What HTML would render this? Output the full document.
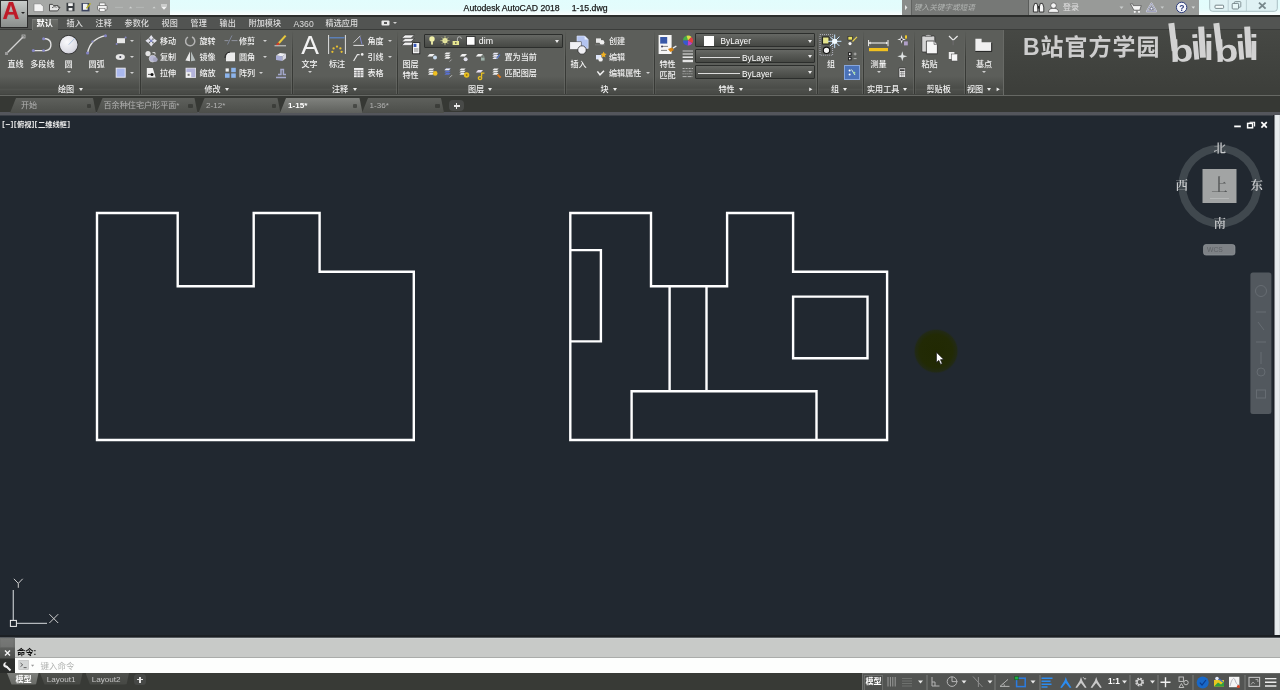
<!DOCTYPE html><html lang="zh"><head><meta charset="utf-8"><title>Autodesk AutoCAD 2018 1-15.dwg</title><style>
*{box-sizing:border-box;margin:0;padding:0}
html,body{width:1280px;height:690px;overflow:hidden;background:#212830}
body{position:relative;font-family:"Liberation Sans","Noto Sans CJK SC",sans-serif;font-size:8px;color:#e0e0e0;line-height:1}
.a{position:absolute}
.t{position:absolute;white-space:nowrap;line-height:10px;height:10px;font-size:8.1px;color:#f2f2f2;font-weight:500}
.c{text-align:center}
.sep{position:absolute;top:31px;height:63px;width:3px;background:linear-gradient(90deg,rgba(110,112,108,.55) 0 1px,rgba(52,54,50,.9) 1px 2px,rgba(100,102,98,.4) 2px 3px);-webkit-mask-image:linear-gradient(transparent,#000 45%);mask-image:linear-gradient(transparent,#000 45%)}
.arr{position:absolute;width:0;height:0;border-left:2.700px solid transparent;border-right:2.700px solid transparent;border-top:3.200px solid #ececec}
.arrs{position:absolute;width:0;height:0;border-left:2px solid transparent;border-right:2px solid transparent;border-top:2.5px solid #cfcfcf}
.combo{position:absolute;height:14.400px;border:1px solid #2c2e2c;border-radius:1px;background:linear-gradient(#666864,#565854 45%,#464844)}
.ptitle{position:absolute;top:85px;height:10px;line-height:10px;font-size:8.1px;color:#f2f2f2;white-space:nowrap;font-weight:500}
.ftab{position:absolute;top:97px;height:16px;background:linear-gradient(#585858,#464646);border-radius:6px 6px 0 0;transform:perspective(20px) rotateX(8deg);transform-origin:bottom}
</style></head><body><div id="app" style="position:absolute;left:0;top:0;width:1280px;height:690px;will-change:transform">
<div class="a" style="left:0;top:0;width:1280px;height:16px;background:linear-gradient(#e2fdfd 0,#e4fcfc 9px,#f0fcfc 12px,#fafefe 15px)"></div>
<div class="a" style="left:27px;top:0;width:143px;height:16px;background:#a6a8a6"></div>
<div class="t" style="left:463.600px;top:2.600px;color:#161616;font-size:8.700px;-webkit-text-stroke:.25px #222">Autodesk AutoCAD 2018&nbsp;&nbsp;&nbsp;&nbsp;&nbsp;1-15.dwg</div>
<div class="a" style="left:902px;top:0;width:297px;height:16px;background:#989a98"></div>
<div class="a" style="left:902px;top:0;width:9px;height:16px;background:#8a8c8a"></div>
<div class="a" style="left:911px;top:0px;width:118px;height:16px;background:#767876;border-left:1px solid #606260;border-right:1px solid #5a5c5a"></div>
<div class="t" style="left:914px;top:3px;color:#b2b5b3;font-style:italic;font-size:7.600px;font-weight:400">键入关键字或短语</div>
<div class="t" style="left:1063px;top:3.400px;color:#e2e2e2;font-size:8px;font-weight:400">登录</div>
<svg class="a" style="left:0;top:0" width="1280" height="16" viewBox="0 0 1280 16" fill="none"><g transform="translate(0 -.6)"><path d="M34 4.400h6.400l3 2.600v5.200H34z" fill="#f4f4f4" stroke="#777" stroke-width=".6"/><path d="M49.500 11.500V5h3l1 1.200h4.500v1.600h2l-2.400 3.700z" fill="#e4e4e4" stroke="#3c3c3c" stroke-width=".9"/><path d="M52 8.500c1.500-1.500 3-1.500 4.500-.5" stroke="#444" stroke-width=".8" fill="none"/><rect x="66.500" y="3.400" width="8" height="8.400" fill="#3a3e42"/><rect x="68.200" y="3.800" width="4.600" height="2.800" fill="#f4f4f4"/><rect x="68.600" y="8.600" width="3.800" height="2.600" fill="#f0f0f0"/><rect x="81.500" y="3.600" width="8" height="8.400" fill="#3c4460"/><rect x="83" y="4.400" width="4.600" height="6" fill="#f0f0f0"/><path d="M86.500 9l4-5" stroke="#b8b020" stroke-width="1.500"/><rect x="97.500" y="6" width="9.600" height="4.600" rx="1" fill="#f0f0f0" stroke="#555" stroke-width=".7"/><rect x="99.600" y="3.600" width="5.400" height="2.600" fill="#fafafa" stroke="#555" stroke-width=".5"/><rect x="99.600" y="9.200" width="5.400" height="3" fill="#fafafa" stroke="#555" stroke-width=".5"/></g><path d="M115 7.400h8M136 7.400h8" stroke="#b4b7b6" stroke-width="1"/><path d="M129 8.200l1.600-1.600 1.600 1.600zM152.500 8.200l1.600-1.600 1.600 1.600z" fill="#d0d2d1"/><path d="M161 5h6" stroke="#f0f0f0" stroke-width="1"/><path d="M161 6.600h6l-3 3.200z" fill="#f4f4f4"/><path d="M905 5l2.400 2.600-2.400 2.600z" fill="#e4e4e4"/><path d="M1033.400 12V7l1.300-3.600h2.200l.9 3.400V12zM1039.400 12V6.800l.9-3.400h2.200l1.300 3.600V12z" fill="#f6f6f6" stroke="#2a2a2a" stroke-width=".9"/><rect x="1037.600" y="6" width="2" height="2.600" fill="#2a2a2a"/><circle cx="1053.500" cy="5.600" r="2.800" fill="#f4f4f4" stroke="#444" stroke-width=".7"/><path d="M1048.500 12.400c0-3.400 2.200-4 5-4s5 .6 5 4z" fill="#f4f4f4" stroke="#444" stroke-width=".7"/><path d="M1119.500 6.500h4l-2 2.400z" fill="#c8cccb"/><path d="M1130.400 3.800h2.200l.6 1.800h8l-1.400 4.600h-5.800z" fill="#f6f6f6" stroke="#3a3a3a" stroke-width=".6"/><circle cx="1134.800" cy="11.800" r="1.100" fill="#f6f6f6"/><circle cx="1139" cy="11.800" r="1.100" fill="#f6f6f6"/><path d="M1151.500 3.400l4.800 8h-9.600z" fill="none" stroke="#f4f4f8" stroke-width="1.500" stroke-linejoin="round"/><path d="M1151.500 3.400l4.800 8h-9.600z" fill="none" stroke="#384078" stroke-width=".5" stroke-linejoin="round"/><circle cx="1151.500" cy="8.600" r="1.300" fill="#f4f4f8" stroke="#384078" stroke-width=".5"/><path d="M1160.500 6.500h3.600l-1.800 2.200z" fill="#c8cccb"/><circle cx="1181.600" cy="7.400" r="5.200" fill="#f6f6fa" stroke="#2c3c7c" stroke-width="1"/><path d="M1191.500 6.500h3.600l-1.800 2.200z" fill="#d8dcdb"/><path d="M1209.700 0V8.500a2.800 2.800 0 0 0 2.800 2.800H1274.500a2.800 2.800 0 0 0 2.800-2.800V0" fill="#e0f2f4" stroke="#a4b8bc" stroke-width=".9"/><path d="M1228.200 0v11.200M1246.400 0v11.200" stroke="#b4c8cc" stroke-width=".8"/><rect x="1215" y="5.200" width="8.600" height="3.200" rx=".8" fill="#f8ffff" stroke="#6c7c80" stroke-width=".9"/><rect x="1234.400" y="1.600" width="6.400" height="5.600" rx=".8" fill="none" stroke="#7c8c90" stroke-width=".9"/><rect x="1232.200" y="3.400" width="6.400" height="5.600" rx=".8" fill="#e8f8f8" stroke="#6c7c80" stroke-width=".9"/><path d="M1259 2.600l6.600 6M1265.600 2.600l-6.600 6" stroke="#78888c" stroke-width="1.900"/></svg>
<div class="t" style="left:1179.200px;top:2.500px;color:#283878;font-weight:bold;font-size:8.500px">?</div>
<div class="a" style="left:0;top:15px;width:1280px;height:15px;background:linear-gradient(#2c2e2c 0,#2c2e2c 1.6px,#525452 2px,#525452 13.6px,#3a3c3a 14px)"></div>
<div class="a" style="left:32px;top:19px;width:26px;height:11px;background:linear-gradient(#6a6c68,#5c5e5a);border-top:1px solid #7a7c78;border-left:1px solid #747672"></div>
<div class="t" style="left:36.6px;top:19.200px;color:#fff;font-weight:bold">默认</div>
<div class="t" style="left:66.6px;top:19.200px;color:#dcdcdc">插入</div>
<div class="t" style="left:95.6px;top:19.200px;color:#dcdcdc">注释</div>
<div class="t" style="left:124.6px;top:19.200px;color:#dcdcdc">参数化</div>
<div class="t" style="left:161.6px;top:19.200px;color:#dcdcdc">视图</div>
<div class="t" style="left:190.6px;top:19.200px;color:#dcdcdc">管理</div>
<div class="t" style="left:219.6px;top:19.200px;color:#dcdcdc">输出</div>
<div class="t" style="left:248.6px;top:19.200px;color:#dcdcdc">附加模块</div>
<div class="t" style="left:293.6px;top:19.200px;color:#dcdcdc;font-size:8.600px">A360</div>
<div class="t" style="left:325.6px;top:19.200px;color:#dcdcdc">精选应用</div>
<div class="a" style="left:0;top:30px;width:1280px;height:65px;background:linear-gradient(#464844,#3c3e3a)"></div>
<div class="a" style="left:0;top:30px;width:1003.500px;height:65px;border-right:1.500px solid #686a66;background:linear-gradient(#5c5e5a 0,#5c5e5a 46px,#4a4c48 58px,#50524e 59.500px,#4a4c48 61px,#484a46 64px,#3c3e3a 65px)"></div>
<div class="a" style="left:0;top:95px;width:1280px;height:1px;background:#666864"></div>
<div class="a" style="left:0;top:0;width:28px;height:28px;background:#2c2c2c"></div>
<div class="a" style="left:1px;top:1px;width:26px;height:26px;background:linear-gradient(#c9cdcb,#a4a8a6 55%,#8a8e8c)"></div>
<div class="a" style="left:2px;top:0px;width:18px;height:22px;font-size:23px;line-height:22px;font-weight:bold;color:#be1a28;text-align:center;transform:scaleX(1.02);text-shadow:0 0 1px rgba(190,40,50,.6)">A</div>
<div class="arrs" style="left:21px;top:12px;border-top-color:#222"></div>
<div class="sep" style="left:139px"></div>
<div class="sep" style="left:291px"></div>
<div class="sep" style="left:396px"></div>
<div class="sep" style="left:564px"></div>
<div class="sep" style="left:653px"></div>
<div class="sep" style="left:816px"></div>
<div class="sep" style="left:862px"></div>
<div class="sep" style="left:913px"></div>
<div class="sep" style="left:964px"></div>
<div class="t c" style="left:-14.5px;top:60px;width:60px;">直线</div>
<div class="t c" style="left:12.4px;top:60px;width:60px;">多段线</div>
<div class="t c" style="left:38.5px;top:60px;width:60px;">圆</div>
<div class="t c" style="left:66.5px;top:60px;width:60px;">圆弧</div>
<div class="arrs" style="left:66.5px;top:71px"></div>
<div class="arrs" style="left:94.5px;top:71px"></div>
<div class="arrs" style="left:130.3px;top:40px"></div>
<div class="arrs" style="left:130.3px;top:56.2px"></div>
<div class="arrs" style="left:130.3px;top:72.2px"></div>
<div class="ptitle" style="left:58px">绘图</div>
<div class="arr" style="left:78.5px;top:87.5px"></div>
<div class="t" style="left:160px;top:37px;">移动</div>
<div class="t" style="left:160px;top:53.2px;">复制</div>
<div class="t" style="left:160px;top:69.2px;">拉伸</div>
<div class="t" style="left:199.5px;top:37px;">旋转</div>
<div class="t" style="left:199.5px;top:53.2px;">镜像</div>
<div class="t" style="left:199.5px;top:69.2px;">缩放</div>
<div class="t" style="left:239px;top:37px;">修剪</div>
<div class="t" style="left:239px;top:53.2px;">圆角</div>
<div class="t" style="left:239px;top:69.2px;">阵列</div>
<div class="arrs" style="left:262.5px;top:40px"></div>
<div class="arrs" style="left:262.5px;top:56.2px"></div>
<div class="arrs" style="left:259px;top:72.2px"></div>
<div class="ptitle" style="left:204.5px">修改</div>
<div class="arr" style="left:224.5px;top:87.5px"></div>
<div class="a" style="left:299px;top:31px;width:22px;height:28px;font-size:26.500px;line-height:28px;color:#f2f2f2;text-align:center;font-weight:normal">A</div>
<div class="t c" style="left:279.5px;top:60px;width:60px;">文字</div>
<div class="arrs" style="left:307.5px;top:71px"></div>
<div class="t c" style="left:307px;top:60px;width:60px;">标注</div>
<div class="t" style="left:367.5px;top:37px;">角度</div>
<div class="t" style="left:367.5px;top:53.2px;">引线</div>
<div class="t" style="left:367.5px;top:69.2px;">表格</div>
<div class="arrs" style="left:388px;top:40px"></div>
<div class="arrs" style="left:388px;top:56.2px"></div>
<div class="ptitle" style="left:332px">注释</div>
<div class="arr" style="left:352.5px;top:87.5px"></div>
<div class="t c" style="left:380.5px;top:60px;width:60px;">图层</div>
<div class="t c" style="left:380.5px;top:71px;width:60px;">特性</div>
<div class="combo" style="left:424px;top:33.600px;width:138.600px"></div>
<div class="t" style="left:478.8px;top:36.4px;color:#fff;font-size:8.800px">dim</div>
<div class="arr" style="left:554.5px;top:39.5px"></div>
<div class="t" style="left:504.5px;top:53.2px;">置为当前</div>
<div class="t" style="left:504.5px;top:69.2px;">匹配图层</div>
<div class="ptitle" style="left:468px">图层</div>
<div class="arr" style="left:488px;top:87.5px"></div>
<div class="t c" style="left:548.5px;top:60px;width:60px;">插入</div>
<div class="t" style="left:609px;top:37px;">创建</div>
<div class="t" style="left:609px;top:53.2px;">编辑</div>
<div class="t" style="left:609px;top:69.2px;">编辑属性</div>
<div class="arrs" style="left:645.5px;top:72.2px"></div>
<div class="ptitle" style="left:600.5px">块</div>
<div class="arr" style="left:612.5px;top:87.5px"></div>
<div class="t c" style="left:637.5px;top:60px;width:60px;">特性</div>
<div class="t c" style="left:637.5px;top:71px;width:60px;">匹配</div>
<div class="combo" style="left:695px;top:33px;width:120px"></div>
<div class="arr" style="left:808.1px;top:39.5px"></div>
<div class="combo" style="left:695px;top:49px;width:120px"></div>
<div class="arr" style="left:808.1px;top:55.4px"></div>
<div class="combo" style="left:695px;top:65px;width:120px"></div>
<div class="arr" style="left:808.1px;top:70.9px"></div>
<div class="t" style="left:720.5px;top:36.4px;color:#fff;font-size:8.300px">ByLayer</div>
<div class="t" style="left:742px;top:52.6px;color:#fff;font-size:8.300px">ByLayer</div>
<div class="t" style="left:742px;top:68.6px;color:#fff;font-size:8.300px">ByLayer</div>
<div class="a" style="left:704px;top:36px;width:10px;height:10px;background:#fff"></div>
<div class="a" style="left:700px;top:57px;width:40px;height:1px;background:#ddd"></div>
<div class="a" style="left:698px;top:73px;width:42px;height:1px;background:#ddd"></div>
<div class="ptitle" style="left:718.5px">特性</div>
<div class="arr" style="left:738.5px;top:87.5px"></div>
<div class="t c" style="left:801px;top:60px;width:60px;">组</div>
<div class="ptitle" style="left:831px">组</div>
<div class="arr" style="left:843px;top:87.5px"></div>
<div class="a" style="left:844px;top:65px;width:16px;height:15px;background:#4a72b8;border:1px solid #86a6dc"></div>
<div class="t c" style="left:848.5px;top:60px;width:60px;">测量</div>
<div class="arrs" style="left:876.5px;top:71px"></div>
<div class="ptitle" style="left:867px">实用工具</div>
<div class="arr" style="left:902.5px;top:87.5px"></div>
<div class="t c" style="left:899.5px;top:60px;width:60px;">粘贴</div>
<div class="arrs" style="left:927.5px;top:71px"></div>
<div class="ptitle" style="left:926.5px">剪贴板</div>
<div class="t c" style="left:954px;top:60px;width:60px;">基点</div>
<div class="arrs" style="left:982px;top:71px"></div>
<div class="ptitle" style="left:967px">视图</div>
<div class="arr" style="left:987px;top:87.5px"></div>
<svg class="a" style="left:0;top:0" width="1280" height="116" viewBox="0 0 1280 116" fill="none"><defs><radialGradient id="gc" cx=".4" cy=".35" r=".8"><stop offset="0" stop-color="#fafafc"/><stop offset=".7" stop-color="#dcdce4"/><stop offset="1" stop-color="#b8b8c4"/></radialGradient></defs><path d="M6.5 53.5L23.5 36.5" stroke="#d4d4d4" stroke-width="1.2"/><rect x="5" y="52" width="3" height="3" fill="#9a9a9a"/><rect x="22" y="35" width="3" height="3" fill="none" stroke="#bbb" stroke-width=".8"/><path d="M33 50.6H46A6 6 0 0 0 46 38.8H43.5" stroke="#e2e2e2" stroke-width="1.4" fill="none"/><circle cx="33.3" cy="50.6" r="1.5" fill="#8484c4"/><circle cx="43.6" cy="50.6" r="1.4" fill="#8484c4"/><circle cx="43.6" cy="38.8" r="1.5" fill="#8484c4"/><circle cx="68.7" cy="44.7" r="9.6" fill="#2c2c2c"/><circle cx="68.7" cy="44.7" r="8.9" fill="url(#gc)"/><path d="M68.7 44.7L75 38" stroke="#9db8d8" stroke-width=".8"/><path d="M87.6 53Q90 39 105.5 35.6" stroke="#e4e4e4" stroke-width="1.4" fill="none"/><circle cx="87.6" cy="53" r="1.6" fill="#8484c4"/><circle cx="105.5" cy="35.8" r="1.5" fill="#8484c4"/><circle cx="92.5" cy="41.5" r="1.1" fill="#8484c4"/><rect x="117" y="38.2" width="8" height="5" fill="#e8e8e8"/><circle cx="116.6" cy="44" r="1" fill="#8484c4"/><circle cx="125.6" cy="37.6" r="1" fill="#8484c4"/><ellipse cx="120.3" cy="57" rx="4.6" ry="3" fill="#e6e6e6"/><circle cx="120.3" cy="57" r="1" fill="#445"/><rect x="116.2" y="68.2" width="9" height="9" fill="#aab8ee" stroke="#e8e8f4" stroke-width="1"/><path d="M151.2 35l2.6 3.4h-1.6v1.4h1.4v-1.6l3.4 2.6-3.4 2.6v-1.6h-1.4v1.4h1.6l-2.6 3.4-2.6-3.4h1.6v-1.4h-1.4v1.6l-3.4-2.6 3.4-2.6v1.6h1.4v-1.4h-1.6z" fill="#e4e4ee"/><rect x="150" y="39.6" width="2.4" height="2.4" fill="#7c84c0"/><circle cx="148" cy="53.6" r="2.6" fill="#e4e4e4"/><circle cx="152.6" cy="58.6" r="3.4" fill="#b8b8d4" stroke="#ddd" stroke-width=".6"/><circle cx="155.3" cy="59.6" r="2.4" fill="#a4a4c0"/><path d="M152.5 52.6h2.5v2" stroke="#ddd" stroke-width="1" fill="none"/><path d="M146.8 68h6l2.8 9.4h-8.8z" fill="#f0f0f0"/><circle cx="152" cy="74.6" r="1.5" fill="#111"/><path d="M148 74.4h3" stroke="#333" stroke-width=".8"/><path d="M192 37A4.6 4.6 0 1 1 188 37.2" stroke="#b4b4b4" stroke-width="1.5" fill="none"/><path d="M190 51.6V61.2L185.4 60.4z" fill="#e8e8e8"/><path d="M191 51.6V61.2L195.4 60.4z" fill="#b4bcbc"/><rect x="186" y="68.2" width="9.6" height="9.2" fill="#b4b4dc"/><rect x="186" y="68.2" width="9.6" height="9.2" fill="none" stroke="#e8e8f0" stroke-width=".8"/><rect x="186" y="72.2" width="5.2" height="5.2" fill="#f4f4f4"/><rect x="187.6" y="73.8" width="2" height="2" fill="#777"/><path d="M224.5 40.6h4M231.5 40.6h6" stroke="#9ca0b0" stroke-width=".8"/><path d="M227.5 44.5l4.5-9" stroke="#8890a8" stroke-width=".8"/><path d="M226 61.2V57A4.6 4.6 0 0 1 230.6 52.6H235V61.2z" fill="#ececec"/><path d="M225 58A6 6 0 0 1 230 52" stroke="#222" stroke-width="1" fill="none"/><rect x="225.6" y="68.4" width="3.2" height="3.2" fill="#f0f0f0"/><rect x="231.2" y="67.8" width="4.6" height="4.4" fill="#8cb4ec"/><rect x="225" y="73.4" width="4.6" height="4.4" fill="#8cb4ec"/><rect x="231.2" y="73.4" width="4.6" height="4.4" fill="#8cb4ec"/><path d="M278.5 43.5L285.6 35.6" stroke="#e8c83c" stroke-width="2"/><path d="M276.8 45.2L279 43" stroke="#d03c28" stroke-width="2.2"/><path d="M274.5 45.8H286" stroke="#e0e0e0" stroke-width=".9"/><path d="M276 55.5l4-2.6 6 .8-3.6 2.6z" fill="#f0f0f4"/><path d="M276 55.5l6.4.8v4.6l-6.4-.9z" fill="#a8acd4"/><path d="M282.4 56.3l3.6-2.6v4.5l-3.6 2.7z" fill="#d8d8e4"/><path d="M276 77.5h10M278 74.5h3v-5h2.4v5h2.6" stroke="#a4a8cc" stroke-width="1.5" fill="none"/><path d="M328.6 35V54M345.4 35V54" stroke="#e0e0e0" stroke-width="1"/><path d="M329.5 37.8H344.5" stroke="#5c8cd8" stroke-width="1.1"/><circle cx="332.4" cy="51.8" r="1.15" fill="#e8c030"/><circle cx="333.6" cy="48.4" r="1.15" fill="#e8c030"/><circle cx="337" cy="46.6" r="1.15" fill="#e8c030"/><circle cx="340.4" cy="48.4" r="1.15" fill="#e8c030"/><circle cx="341.6" cy="51.8" r="1.15" fill="#e8c030"/><path d="M353.6 42.6L360.4 35.8" stroke="#d8d8d8" stroke-width="1"/><path d="M353.4 45.4H364" stroke="#e4e4e4" stroke-width="1"/><path d="M360 37L362 44.5" stroke="#7c84c8" stroke-width="1"/><path d="M353.6 61L357.4 54.6H359.6" stroke="#e4e4e4" stroke-width="1.2" fill="none"/><circle cx="362.2" cy="54.4" r="1.3" fill="#f0f0f0"/><rect x="354" y="68" width="9.4" height="9.2" fill="#f0f0f0"/><path d="M354 70.4h9.4M354 72.7h9.4M354 75h9.4M357.1 70.4v6.8M360.3 70.4v6.8" stroke="#555" stroke-width=".6"/><path d="M405 35h9.4l-3.4 3.2h-9.4z" fill="#f2f2f2" stroke="#222" stroke-width=".5"/><path d="M405 38.6h9.4l-3.4 3.2h-9.4z" fill="#f2f2f2" stroke="#222" stroke-width=".5"/><path d="M405 42.2h9.4l-3.4 3.2h-9.4z" fill="#f2f2f2" stroke="#222" stroke-width=".5"/><rect x="412.6" y="42.6" width="7.2" height="11.2" fill="#f4f4f4" stroke="#1c1c1c" stroke-width=".8"/><rect x="413.6" y="43.8" width="2.8" height="3.2" fill="#3858b8"/><path d="M414 49h4.4M414 51h4.4" stroke="#555" stroke-width=".7"/><circle cx="432" cy="39" r="2.7" fill="#f0f0a8"/><rect x="431" y="41" width="2" height="3.6" fill="#e0e0a0"/><circle cx="445" cy="40.6" r="2.6" fill="#f2f2a8"/><path d="M445 36v9.2M440.4 40.6h9.2M441.8 37.4l6.4 6.4M448.2 37.4l-6.4 6.4" stroke="#d8d894" stroke-width=".7"/><rect x="452.6" y="41" width="6.4" height="4" fill="#e6e690"/><rect x="455.2" y="42.2" width="1.2" height="1.6" fill="#444"/><path d="M457.4 41v-2.2a2 2 0 0 1 4 0" stroke="#c0c0c0" stroke-width=".9" fill="none"/><rect x="466.4" y="36.6" width="8.6" height="8.6" fill="#fff" stroke="#222" stroke-width=".8"/><path d="M429.6 54h5l-2.2 2.4h-5z" fill="#f0f0f0"/><circle cx="435" cy="57.6" r="2" fill="#c8dcf0"/><path d="M446 52.6h4.6l-1.6 1.7h-4.6z" fill="#ececec"/><path d="M446 54.8h4.6l-1.6 1.7h-4.6z" fill="#ececec"/><path d="M446 57h4.6l-1.6 1.7h-4.6z" fill="#ececec"/><path d="M449.6 61.6l2-2" stroke="#aaa" stroke-width="1"/><path d="M462 54h5l-2.2 2.4h-5z" fill="#f0f0f0"/><circle cx="465.6" cy="59.2" r="2" fill="#e0e0ec"/><path d="M478 54h5l-2.2 2.4h-5z" fill="#f0f0f0"/><rect x="481" y="57.6" width="3.6" height="3" fill="#9cb0a8"/><path d="M481.8 57.6v-1a1 1 0 0 1 2 0v1" stroke="#9cb0a8" stroke-width=".6" fill="none"/><path d="M494 52.8h4.6l-1.6 1.7h-4.6z" fill="#e8e8f4"/><path d="M494 55h4.6l-1.6 1.7h-4.6z" fill="#e8e8f4"/><path d="M494 57.2h4.6l-1.6 1.7h-4.6z" fill="#e8e8f4"/><path d="M496.5 58.5l3.5-4" stroke="#5878c8" stroke-width="1.2"/><path d="M429.6 68.6h4.6l-1.6 1.7h-4.6z" fill="#ececec"/><path d="M429.6 70.8h4.6l-1.6 1.7h-4.6z" fill="#ececec"/><path d="M429.6 73h4.6l-1.6 1.7h-4.6z" fill="#ececec"/><circle cx="435.2" cy="73.4" r="2.3" fill="#f0c020"/><path d="M446 68.6h4.6l-1.6 1.7h-4.6z" fill="#5870d0"/><path d="M446 70.8h4.6l-1.6 1.7h-4.6z" fill="#5870d0"/><path d="M446 73h4.6l-1.6 1.7h-4.6z" fill="#5870d0"/><path d="M449.6 77.6l2.4-2.4" stroke="#bbb" stroke-width="1"/><path d="M446 68.600h4.6l-1.600 1.700h-4.600z" fill="#eee"/><path d="M461 68.6h4.6l-1.6 1.7h-4.6z" fill="#ececec"/><path d="M461 70.8h4.6l-1.6 1.7h-4.6z" fill="#ececec"/><path d="M461 73h4.6l-1.6 1.7h-4.6z" fill="#ececec"/><circle cx="466.6" cy="75" r="2.7" fill="#e8c020"/><circle cx="466.6" cy="75" r="1" fill="#a07810"/><path d="M478 70h5l-2.2 2.4h-5z" fill="#e4dcf0"/><path d="M480 76.6a1.700 1.500 0 1 0 .1 0M481.600 76.600v-3.400h2.800" stroke="#e8c020" stroke-width="1.300" fill="none"/><path d="M494 68.6h4.6l-1.6 1.7h-4.6z" fill="#ececec"/><path d="M494 70.8h4.6l-1.6 1.7h-4.6z" fill="#ececec"/><path d="M494 73h4.6l-1.6 1.7h-4.6z" fill="#ececec"/><path d="M497.600 74.600l3 3" stroke="#e07818" stroke-width="2"/><path d="M577 36h7.600l3.600 3.600v8.800h-11.200z" fill="#b4c4f0" stroke="#e0e8fc" stroke-width=".6"/><path d="M584.600 36v3.600h3.600z" fill="#e8f0ff"/><rect x="569.800" y="41.800" width="11.400" height="7.800" fill="#f0f0f4" stroke="#333" stroke-width=".5"/><circle cx="582" cy="50" r="4.200" fill="#f0f0f4" stroke="#222" stroke-width=".7"/><rect x="596" y="38.400" width="5" height="4.400" fill="#e8e8e8"/><circle cx="602" cy="42.400" r="2.400" fill="#f0f0f0"/><path d="M595 44.800h10" stroke="#888" stroke-width=".6"/><rect x="596" y="55" width="5.400" height="4.400" fill="#dce4f8"/><circle cx="600.600" cy="59.400" r="2.200" fill="#f0f0f0"/><path d="M603.600 51.600l1 2 2 .4-1.600 1.400.4 2.200-1.800-1.200-1.800 1.200.4-2.200-1.600-1.400 2-.4z" fill="#f0b020"/><path d="M597.400 71.400l2.600 3.400 4-4" stroke="#f0f0f0" stroke-width="1.500" fill="none"/><rect x="658.600" y="35" width="13" height="19" fill="#f6f6f6"/><rect x="660.200" y="37" width="7" height="6.600" fill="#3858a8"/><path d="M662 46.400h6M661 50.400h6" stroke="#666" stroke-width=".8"/><circle cx="662" cy="46.500" r=".9" fill="#335"/><path d="M668 49l4-1.500 2 2.600-3.600 2z" fill="#d88410"/><path d="M673 48.200l3.400-2.200" stroke="#e8e8e8" stroke-width="1.400"/><g transform="translate(688 40.600)"><path d="M0 0L-5 0A5 5 0 0 1 -1.500 -4.770Z" fill="#48b048"/><path d="M0 0L-1.500 -4.770A5 5 0 0 1 3.500 -3.570Z" fill="#d8e040"/><path d="M0 0L3.500 -3.570A5 5 0 0 1 4.300 2.550Z" fill="#e04040"/><path d="M0 0L4.300 2.550A5 5 0 0 1 -.5 4.970Z" fill="#c040c8"/><path d="M0 0L-.5 4.970A5 5 0 0 1 -5 0Z" fill="#3858d0"/></g><path d="M682.600 51H693" stroke="#e4e4e4" stroke-width="0.8"/><path d="M682.600 54H693" stroke="#e4e4e4" stroke-width="1.1"/><path d="M682.600 57.2H693" stroke="#e4e4e4" stroke-width="1.6"/><path d="M682.600 61H693" stroke="#e4e4e4" stroke-width="2.4"/><path d="M682.600 68.5H693" stroke="#b4b4b4" stroke-width="1" stroke-dasharray="2 1"/><path d="M682.600 71.2H693" stroke="#b4b4b4" stroke-width="1" stroke-dasharray="3 1 1 1"/><path d="M682.600 73.8H693" stroke="#b4b4b4" stroke-width="1" stroke-dasharray="1 1"/><path d="M682.600 76.6H693" stroke="#b4b4b4" stroke-width="1" stroke-dasharray="4 1"/><rect x="820" y="34.600" width="12.600" height="20.600" fill="none" stroke="#c8c8d8" stroke-width=".8" stroke-dasharray="1 1"/><rect x="822.600" y="37" width="6.400" height="7" fill="#e4e48c" stroke="#111" stroke-width=".9"/><circle cx="826.500" cy="50.300" r="3.200" fill="#f4f4f4" stroke="#111" stroke-width="1.100"/><path d="M834.700 34.500v13.600M828 41.300h13.400M830 36.600l9.400 9.400M839.400 36.600l-9.400 9.400" stroke="#c4e4ff" stroke-width="1"/><circle cx="834.700" cy="41.300" r="2.600" fill="#f4fcff"/><rect x="848" y="36.400" width="4.400" height="3.600" fill="#e8e060" stroke="#222" stroke-width=".6"/><circle cx="850" cy="43.600" r="1.600" fill="#f4f4f4"/><path d="M852.500 41.500l4.500-4.600" stroke="#e8d050" stroke-width="1.200"/><rect x="848" y="52.200" width="3.600" height="3.600" fill="#222"/><rect x="848" y="56.800" width="3.600" height="3.600" fill="#222"/><circle cx="849.800" cy="54" r=".9" fill="#fff"/><circle cx="849.800" cy="58.600" r=".9" fill="#fff"/><path d="M853.600 54h3M855.100 52.500v3M853.600 58.600h3" stroke="#d0d0d0" stroke-width=".7"/><circle cx="849.600" cy="70.400" r="1" fill="#fff"/><circle cx="849.600" cy="74.400" r="1" fill="#fff"/><path d="M851.500 69.500l3.500 5.500" stroke="#d8f0d8" stroke-width="1"/><circle cx="854.400" cy="72.800" r="1" fill="#9fe09f"/><path d="M869 43H887.600" stroke="#d8d8d8" stroke-width="1.300"/><path d="M868.600 40v6.200M888 40v6.200" stroke="#f0f0f0" stroke-width="1"/><path d="M870.600 41.400v3.200l-1.600-1.600zM886 41.400v3.200l1.600-1.600z" fill="#f0f0f0"/><rect x="869" y="48" width="19" height="3.200" fill="#f0c020"/><path d="M901.6 35l0.968 3.432 3.432 0.968 -3.432 0.968 -0.968 3.432 -0.968 -3.432 -3.432 -0.968 3.432 -0.968 z" fill="#f0f0f0"/><circle cx="901.600" cy="39.400" r="1" fill="#223"/><rect x="905" y="35.400" width="2" height="3.200" fill="#f0c828"/><rect x="904" y="41.400" width="3.800" height="4" fill="#b0a0c8"/><path d="M902.3 51.3l1.1 3.9 3.9 1.1 -3.9 1.1 -1.1 3.9 -1.1 -3.9 -3.9 -1.1 3.9 -1.1 z" fill="#e0e4e4"/><rect x="899" y="68" width="6.600" height="9.400" fill="#e8e8e8" stroke="#333" stroke-width=".6"/><rect x="900" y="69.200" width="4.600" height="1.800" fill="#444"/><path d="M900 72.600h4.600M900 74.600h4.600M901.500 71.600v5M903.100 71.600v5" stroke="#666" stroke-width=".5"/><rect x="921.800" y="36" width="13" height="16" rx="1" fill="#d4d4d4" stroke="#2a2a2a" stroke-width=".7"/><path d="M925 36.200a3.400 1.800 0 0 1 6.600 0z" fill="#eee" stroke="#333" stroke-width=".5"/><path d="M926.400 41h7.600l3.400 3.400v9.400h-11z" fill="#f6f6f6" stroke="#1c1c1c" stroke-width=".7"/><path d="M934 41v3.400h3.400" fill="#ddd" stroke="#333" stroke-width=".5"/><path d="M949 36l4.200 4.200L957.600 36" stroke="#eaeaea" stroke-width="1.200" fill="none"/><path d="M953.200 40.200v5" stroke="#666" stroke-width="1.600"/><rect x="948.800" y="52" width="5.600" height="7" fill="#ececec"/><rect x="951.600" y="54" width="6" height="7" fill="#f6f6f6" stroke="#444" stroke-width=".5"/><path d="M975.400 38.800h6.200v3.400h9.800v8.800h-16z" fill="#f0f0f0"/><path d="M975.400 51.400h16.300V42.600" stroke="#1c1c1c" stroke-width=".9" fill="none"/><path d="M809.200 87.400l3.200 1.900-3.200 1.900zM996.600 87.400l3.200 1.900-3.200 1.900z" fill="#ececec"/><rect x="381.500" y="20.500" width="8" height="5" rx="1" fill="#e8e8e8"/><rect x="384" y="22.200" width="3" height="1.600" fill="#333"/></svg>
<div class="arrs" style="left:392.5px;top:22px"></div>
<div class="a" style="left:1023px;top:33px;height:28px;line-height:28px;font-size:23px;font-weight:bold;color:#cdcdcd;white-space:nowrap;letter-spacing:1px">B站官方学园</div>
<span class="a" style="left:1170.2px;top:35.5585px;font-size:31px;line-height:31px;height:31px;font-weight:bold;color:#d2d2d2;transform-origin:0 85%;transform:rotate(-2deg) scaleX(1.25)">b</span>
<div class="a" style="left:1170.4px;top:22.5px;width:6.4px;height:28px;background:#d2d2d2;transform:rotate(-7deg)"></div>
<span class="a" style="left:1192px;top:29.8725px;font-size:35px;line-height:35px;height:35px;font-weight:bold;color:#d2d2d2;transform-origin:0 85%;transform:rotate(-5deg) scaleX(1)">i</span>
<span class="a" style="left:1197px;top:21.6005px;font-size:43px;line-height:43px;height:43px;font-weight:bold;color:#d2d2d2;transform-origin:0 85%;transform:rotate(-3.3deg) scaleX(1)">l</span>
<span class="a" style="left:1204px;top:30.3725px;font-size:35px;line-height:35px;height:35px;font-weight:bold;color:#d2d2d2;transform-origin:0 85%;transform:rotate(0deg) scaleX(1)">i</span>
<span class="a" style="left:1215.2px;top:35.5585px;font-size:31px;line-height:31px;height:31px;font-weight:bold;color:#d2d2d2;transform-origin:0 85%;transform:rotate(-2deg) scaleX(1.25)">b</span>
<div class="a" style="left:1215.4px;top:22.5px;width:6.4px;height:28px;background:#d2d2d2;transform:rotate(-7deg)"></div>
<span class="a" style="left:1236.5px;top:29.8725px;font-size:35px;line-height:35px;height:35px;font-weight:bold;color:#d2d2d2;transform-origin:0 85%;transform:rotate(-5deg) scaleX(1)">i</span>
<span class="a" style="left:1242.5px;top:21.6005px;font-size:43px;line-height:43px;height:43px;font-weight:bold;color:#d2d2d2;transform-origin:0 85%;transform:rotate(-3.3deg) scaleX(1)">l</span>
<span class="a" style="left:1249px;top:30.3725px;font-size:35px;line-height:35px;height:35px;font-weight:bold;color:#d2d2d2;transform-origin:0 85%;transform:rotate(0deg) scaleX(1)">i</span>
<div class="a" style="left:0;top:96px;width:1280px;height:17px;background:#363834"></div>
<div class="a" style="left:0;top:112px;width:1280px;height:4px;background:linear-gradient(#54565c 0,#54565c 2.600px,#2a3038 4px)"></div>
<div class="a" style="left:10px;top:98px;width:86px;height:15px;background:linear-gradient(#5e605c,#4c4e4a);clip-path:polygon(6px 0,calc(100% - 3px) 0,100% 100%,0 100%);border-radius:6px 4px 0 0"></div>
<div class="t" style="left:21px;top:100.600px;color:#b2b2b2;font-weight:400">开始</div>
<div class="a" style="left:96.5px;top:98px;width:101px;height:15px;background:linear-gradient(#5e605c,#4c4e4a);clip-path:polygon(6px 0,calc(100% - 3px) 0,100% 100%,0 100%);border-radius:6px 4px 0 0"></div>
<div class="t" style="left:103.5px;top:100.600px;color:#b2b2b2;font-weight:400">百余种住宅户形平面*</div>
<div class="a" style="left:198.5px;top:98px;width:82px;height:15px;background:linear-gradient(#5e605c,#4c4e4a);clip-path:polygon(6px 0,calc(100% - 3px) 0,100% 100%,0 100%);border-radius:6px 4px 0 0"></div>
<div class="t" style="left:206px;top:100.600px;color:#b2b2b2;font-weight:400">2-12*</div>
<div class="a" style="left:280px;top:98px;width:82.5px;height:15px;background:linear-gradient(#80827e,#5e605c);clip-path:polygon(6px 0,calc(100% - 3px) 0,100% 100%,0 100%);border-radius:6px 4px 0 0"></div>
<div class="t" style="left:288px;top:100.600px;color:#fff;font-weight:bold">1-15*</div>
<div class="a" style="left:362px;top:98px;width:82px;height:15px;background:linear-gradient(#5e605c,#4c4e4a);clip-path:polygon(6px 0,calc(100% - 3px) 0,100% 100%,0 100%);border-radius:6px 4px 0 0"></div>
<div class="t" style="left:369.5px;top:100.600px;color:#b2b2b2;font-weight:400">1-36*</div>
<div class="a" style="left:86.8px;top:103.500px;width:4.500px;height:4.500px;background:rgba(40,42,38,.55);border-radius:1px"></div>
<div class="a" style="left:188.3px;top:103.500px;width:4.500px;height:4.500px;background:rgba(40,42,38,.55);border-radius:1px"></div>
<div class="a" style="left:271.8px;top:103.500px;width:4.500px;height:4.500px;background:rgba(40,42,38,.55);border-radius:1px"></div>
<div class="a" style="left:352.8px;top:103.500px;width:4.500px;height:4.500px;background:rgba(40,42,38,.55);border-radius:1px"></div>
<div class="a" style="left:435.3px;top:103.500px;width:4.500px;height:4.500px;background:rgba(40,42,38,.55);border-radius:1px"></div>
<div class="a" style="left:448.500px;top:100px;width:15.500px;height:11px;background:#484a48;border-radius:4px"></div>
<div class="a" style="left:453.500px;top:105.300px;width:6px;height:1.400px;background:#e8e8e8"></div><div class="a" style="left:455.800px;top:103px;width:1.400px;height:6px;background:#e8e8e8"></div>
<div class="a" style="left:0;top:116px;width:1280px;height:522px;background:#212830"></div>
<span class="t" style="left:2.3px;top:119.2px;color:#ececec;font-weight:bold;font-size:7.300px;">[</span>
<span class="t" style="left:5.6px;top:119.2px;color:#ececec;font-weight:bold;font-size:7.300px;font-size:8.500px;">–</span>
<span class="t" style="left:10.8px;top:119.2px;color:#ececec;font-weight:bold;font-size:7.300px;">]</span>
<span class="t" style="left:14px;top:119.2px;color:#ececec;font-weight:bold;font-size:7.300px;">[</span>
<span class="t" style="left:16.9px;top:119.6px;color:#ececec;font-weight:bold;font-size:7.300px;">俯视</span>
<span class="t" style="left:31.7px;top:119.2px;color:#ececec;font-weight:bold;font-size:7.300px;">]</span>
<span class="t" style="left:34.7px;top:119.2px;color:#ececec;font-weight:bold;font-size:7.300px;">[</span>
<span class="t" style="left:38px;top:119.6px;color:#ececec;font-weight:bold;font-size:7.300px;letter-spacing:-.1px;">二维线框</span>
<span class="t" style="left:67.6px;top:119.2px;color:#ececec;font-weight:bold;font-size:7.300px;">]</span>
<svg class="a" style="left:0;top:116px" width="1280" height="522" viewBox="0 116 1280 522" fill="none" stroke="#fff" stroke-width="2.400" stroke-linejoin="miter"><path d="M97 213H177.700V286.300H253.700V213H319.600V271.800H413.800V440H97Z"/><path d="M570.300 213H651V286.300H727.100V213H793.100V271.800H887.100V440H570.300Z"/><path d="M570.300 250.100H600.900V341.400H570.300"/><path d="M669.600 286.300V391.200M706.500 286.300V391.200"/><path d="M631.600 440V391.200H816.500V440"/><path d="M793.100 296.600H867.500V358.300H793.100Z"/></svg>
<svg class="a" style="left:0;top:116px" width="1280" height="522" viewBox="0 116 1280 522" fill="none"><defs><radialGradient id="halo"><stop offset="0" stop-color="#212902"/><stop offset=".72" stop-color="#222a05"/><stop offset=".9" stop-color="#222a10" stop-opacity=".85"/><stop offset="1" stop-color="#212830" stop-opacity="0"/></radialGradient></defs><circle cx="936.100" cy="351.100" r="23" fill="url(#halo)"/><path d="M936.400 352.200v10.400l2.400-2.200 1.800 4 1.700-.8-1.800-3.900 3.300-.2z" fill="#fff" stroke="#111" stroke-width=".7"/><path d="M13.300 590V620.300M16.700 623.400H47" stroke="#b4b8bc" stroke-width="1.300"/><rect x="10.400" y="620.400" width="6" height="6" stroke="#f0f0f0" stroke-width="1" fill="none"/><path d="M13.900 578.800l4.400 4.600 4.400-4.600M18.300 583.400v4.400" stroke="#d0d0d0" stroke-width="1" fill="none"/><path d="M49.400 614.200l8.800 8.800M58.200 614.200l-8.800 8.800" stroke="#d0d0d0" stroke-width="1"/><circle cx="1219.700" cy="186" r="37.400" stroke="#40484e" stroke-width="7.800" fill="none"/><rect x="1202.500" y="169" width="34" height="34" fill="#a2a4a4"/><path d="M1210 198.500h19" stroke="#b6b8b8" stroke-width="1"/><rect x="1203.500" y="244.500" width="31.500" height="10.600" rx="2.500" fill="#7e8286" stroke="#999da1" stroke-width=".6"/><rect x="1250.400" y="272.400" width="21" height="141.600" rx="2.500" fill="#52585e"/><g stroke="#666c72" stroke-width="1" fill="none"><circle cx="1261" cy="291" r="5.500"/><path d="M1256 312h10M1258 322l6 8M1256 342h10M1261 352v12"/><circle cx="1261" cy="372" r="4"/><rect x="1256.500" y="390" width="9" height="8"/></g><path d="M1234.200 126.400h6.600" stroke="#fff" stroke-width="1.800"/><rect x="1247.600" y="123.400" width="5" height="4.400" stroke="#fff" stroke-width="1.500" fill="none"/><path d="M1249.600 122.200h5v4.400" stroke="#fff" stroke-width="1.100" fill="none"/><path d="M1261.400 122.200l5.400 5.400M1266.800 122.200l-5.400 5.400" stroke="#fff" stroke-width="1.700"/></svg>
<div class="a c" style="left:1211.8px;top:142.1px;width:16px;height:14px;line-height:14px;font-size:12.500px;font-weight:600;color:#c8cacc;font-family:'Liberation Serif','Noto Serif CJK SC',serif;">北</div>
<div class="a c" style="left:1211.8px;top:216.7px;width:16px;height:14px;line-height:14px;font-size:12.500px;font-weight:600;color:#c8cacc;font-family:'Liberation Serif','Noto Serif CJK SC',serif;">南</div>
<div class="a c" style="left:1173.7px;top:179.1px;width:16px;height:14px;line-height:14px;font-size:12.500px;font-weight:600;color:#c8cacc;font-family:'Liberation Serif','Noto Serif CJK SC',serif;">西</div>
<div class="a c" style="left:1248.7px;top:179.1px;width:16px;height:14px;line-height:14px;font-size:12.500px;font-weight:600;color:#c8cacc;font-family:'Liberation Serif','Noto Serif CJK SC',serif;">东</div>
<div class="a c" style="left:1209.500px;top:176px;width:20px;height:20px;line-height:20px;font-size:16.500px;font-weight:500;color:#565859;font-family:'Liberation Serif','Noto Serif CJK SC',serif;">上</div>
<div class="t" style="left:1207px;top:245px;font-size:6.800px;color:#5e6266">WCS</div>
<div class="a" style="left:1273px;top:115px;width:7px;height:522px;background:linear-gradient(90deg,#1c2026 0,#1c2026 1.300px,#dce0e4 1.700px,#e8ecee 3px,#e8ecee 6.300px,#b4b8bc 7px)"></div>
<div class="a" style="left:0;top:634.500px;width:1280px;height:4px;background:linear-gradient(#1c2024 0,#1c2024 1.500px,#74787c 3px,#c4c8c8 4px)"></div>
<div class="a" style="left:0;top:638px;width:1280px;height:20px;background:linear-gradient(#d2d6d6 0,#c8cac8 1.500px,#c8cac8 19px,#8c8e8c 20px)"></div>
<div class="a" style="left:0;top:658px;width:1280px;height:15px;background:#fdfefd"></div>
<div class="a" style="left:0;top:638px;width:15px;height:35px;background:linear-gradient(#747674 0,#6c6e6c 9px,#5c5e5c 10px,#4c4e4c 20px,#2e302e 21px,#2a2c2a 35px)"></div>
<div class="t" style="left:17px;top:646.500px;color:#0c0c0c;font-weight:bold;font-size:8.300px">命令:</div>
<div class="t" style="left:40.400px;top:660.600px;color:#b0b2b0;font-size:8.500px;font-weight:400">键入命令</div>
<div class="a" style="left:0;top:673px;width:1280px;height:17px;background:#383a36"></div>
<div class="a" style="left:862px;top:673px;width:418px;height:17px;background:#525452;border-top:1px solid #686a68;border-left:1px solid #6e706e"></div>
<div class="a" style="left:864px;top:675px;width:19px;height:15px;border:1px solid #6a6c6a;border-bottom:none;background:#4c4e4c"></div>
<div class="a" style="left:7px;top:673px;width:31.5px;height:11.500px;background:linear-gradient(#7c7e7a,#686a66);clip-path:polygon(0 0,100% 0,calc(100% - 2.500px) 100%,4.500px 100%);border-radius:0 0 5px 5px"></div>
<div class="t" style="left:15.400px;top:674.600px;color:#fff;font-weight:bold">模型</div>
<div class="a" style="left:40px;top:673px;width:42.5px;height:11.500px;background:linear-gradient(#4e504c,#464844);clip-path:polygon(0 0,100% 0,calc(100% - 2.500px) 100%,4.500px 100%);border-radius:0 0 5px 5px"></div>
<div class="t" style="left:46.800px;top:674.800px;color:#c4c4c4;font-size:8.100px;font-weight:400">Layout1</div>
<div class="a" style="left:85.5px;top:673px;width:43.5px;height:11.500px;background:linear-gradient(#4e504c,#464844);clip-path:polygon(0 0,100% 0,calc(100% - 2.500px) 100%,4.500px 100%);border-radius:0 0 5px 5px"></div>
<div class="t" style="left:91.800px;top:674.800px;color:#c4c4c4;font-size:8.100px;font-weight:400">Layout2</div>
<div class="a" style="left:134px;top:674px;width:12px;height:10.500px;background:#464846;border-radius:3.500px"></div>
<div class="a" style="left:137px;top:679.100px;width:6px;height:1.400px;background:#e4e4e4"></div><div class="a" style="left:139.300px;top:676.800px;width:1.400px;height:6px;background:#e4e4e4"></div>
<div class="t" style="left:865.400px;top:677px;color:#fff;font-weight:bold">模型</div>
<div class="t" style="left:1108px;top:677.400px;color:#fff;font-weight:bold;font-size:8.200px">1:1</div>
<svg class="a" style="left:0;top:636px" width="1280" height="54" viewBox="0 636 1280 54" fill="none"><path d="M5 650.600l5 5M10 650.600l-5 5" stroke="#f4f4f4" stroke-width="1.400"/><path d="M10.500 670.500l-4.500-4.500" stroke="#f0f0f0" stroke-width="2"/><path d="M6.500 662.300a2.700 2.700 0 1 0 1.600 4.200l-2.300-.9-.6-1.700z" fill="#f0f0f0"/><path d="M1.500 640h12" stroke="#888" stroke-width=".8" stroke-dasharray="1 1"/><path d="M1.500 642h12" stroke="#888" stroke-width=".8" stroke-dasharray="1 1"/><path d="M1.500 644h12" stroke="#888" stroke-width=".8" stroke-dasharray="1 1"/><path d="M1.500 646h12" stroke="#888" stroke-width=".8" stroke-dasharray="1 1"/><rect x="18.800" y="660.400" width="9.600" height="9.200" fill="#d4d6d6" stroke="#b8b8b8" stroke-width=".6"/><path d="M20.500 663l2.200 1.800-2.200 1.800M23.600 667.600h3" stroke="#555" stroke-width=".9" fill="none"/><path d="M31 664.800h3.200l-1.600 2z" fill="#999"/><path d="M888 677v9.500M890.400 677v9.500M892.800 677v9.500M895.200 677v9.500" stroke="#9a9a9a" stroke-width="1"/><path d="M902 678.500h10M902 681h10M902 683.500h10M902 686h10" stroke="#767876" stroke-width=".8"/><path d="M918 680.5h5l-2.500 3z" fill="#e8e8e8"/><path d="M927 675v15" stroke="#727472" stroke-width="1.300"/><path d="M995 675v15" stroke="#727472" stroke-width="1.300"/><path d="M1040 675v15" stroke="#727472" stroke-width="1.300"/><path d="M1130 675v15" stroke="#727472" stroke-width="1.300"/><path d="M1158 675v15" stroke="#727472" stroke-width="1.300"/><path d="M1193 675v15" stroke="#727472" stroke-width="1.300"/><path d="M1245 675v15" stroke="#727472" stroke-width="1.300"/><path d="M932 677v9h7.500M932 682h3v4" stroke="#b4b4b4" stroke-width="1" fill="none"/><circle cx="952" cy="681.600" r="4.800" stroke="#b4b4b4" stroke-width="1" fill="none"/><path d="M952 681.600h5.500M952 681.600v-4.800" stroke="#b4b4b4" stroke-width="1"/><path d="M961.5 680.5h5l-2.500 3z" fill="#e8e8e8"/><path d="M973 676.500l9.500 10.500M978.400 677v10" stroke="#8c8c8c" stroke-width="1"/><path d="M987.5 680.5h5l-2.500 3z" fill="#e8e8e8"/><path d="M1000 686.400h9.500M1000 686.400l8-7" stroke="#b4b4b4" stroke-width="1"/><path d="M1004.500 686.400a4 4 0 0 0-1.300-3" stroke="#b4b4b4" stroke-width=".8" fill="none"/><rect x="1016.600" y="678.200" width="8.600" height="8.400" stroke="#2c7ce0" stroke-width="1.500" fill="none"/><rect x="1014.800" y="676.400" width="3.400" height="3.400" fill="#20b040" stroke="#0c4c1c" stroke-width=".5"/><path d="M1030.5 680.5h5l-2.500 3z" fill="#e8e8e8"/><path d="M1041.500 678.200h11M1041.500 681.200h9M1041.500 684.200h10M1041.500 687h6" stroke="#2c8cf0" stroke-width="1.500"/><path d="M1060.2 687.500l4.200-6.500 1.400-4 1.400 4 4.200 6.500-1.600.5-4-5-4 5z" fill="#2c8cf0"/><path d="M1075.4 687.500l4.200-6.500 1.400-4 1.400 4 4.200 6.500-1.600.5-4-5-4 5z" fill="#c8c8c8"/><path d="M1090.6 687.500l4.200-6.500 1.400-4 1.400 4 4.200 6.500-1.600.5-4-5-4 5z" fill="#c8c8c8"/><path d="M1083 677l1 1.600 1.800-.2-1 1.400" stroke="#c8c8c8" stroke-width=".8" fill="none"/><path d="M1122 680.5h5l-2.500 3z" fill="#e8e8e8"/><circle cx="1139.600" cy="682" r="3.300" stroke="#d0d0d0" stroke-width="2.200" fill="none" stroke-dasharray="1.700 .900"/><circle cx="1139.600" cy="682" r="2.500" fill="none" stroke="#d0d0d0" stroke-width="1.200"/><path d="M1150 680.5h5l-2.500 3z" fill="#e8e8e8"/><path d="M1160.500 682.300h10M1165.500 677.300v10" stroke="#f0f0f0" stroke-width="1.400"/><rect x="1179" y="677" width="4.400" height="4.400" stroke="#c8c8c8" stroke-width=".9" fill="none"/><circle cx="1186" cy="682.600" r="2.200" stroke="#c8c8c8" stroke-width=".9" fill="none"/><path d="M1179 687.500l2.400-4 2.400 4z" stroke="#c8c8c8" stroke-width=".9" fill="none"/><circle cx="1202.700" cy="682.400" r="6" fill="#1868c8"/><path d="M1199.800 682.600l2.200 2.400 4-5" stroke="#0c3c8c" stroke-width="1.200" fill="none"/><rect x="1214" y="680" width="10" height="6.500" fill="#e8c820"/><path d="M1214 686.500l4-4 3 2 3-3v5z" fill="#30a040"/><circle cx="1217" cy="678.500" r="1.800" fill="#e0e8f8"/><path d="M1219 679l4 3" stroke="#3c6cd0" stroke-width="1.400"/><rect x="1229" y="676.800" width="10.400" height="10.400" fill="#f4f4f4"/><path d="M1230 686c2-8 4-9 5-6s2 5 4 5" stroke="#b0b0b8" stroke-width=".9" fill="none"/><circle cx="1238.400" cy="686.400" r="1.500" fill="#d84020"/><rect x="1249" y="677.400" width="10.600" height="9" stroke="#c0c0c0" stroke-width="1.100" fill="none"/><path d="M1251 684.500l2-2.400 1.600 1.600M1255.500 679.600h2.400v2.400" stroke="#c0c0c0" stroke-width=".8" fill="none"/><path d="M1265 678.600h11.400M1265 682.300h11.400M1265 686h11.400" stroke="#ececec" stroke-width="1.400"/></svg>
</div></body></html>
